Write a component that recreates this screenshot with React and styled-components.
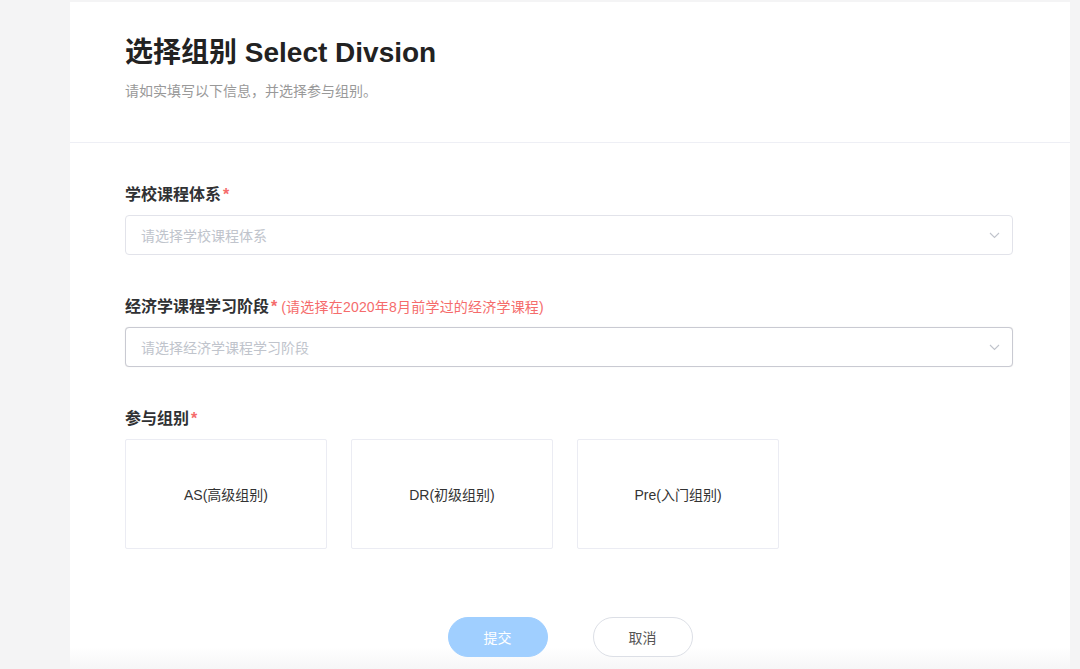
import React from 'react';
import styled, { createGlobalStyle } from 'styled-components';

const GlobalStyle = createGlobalStyle`
  html, body {
    margin: 0;
    padding: 0;
    background: #f4f4f5;
    font-family: "Liberation Sans", "Noto Sans CJK SC", sans-serif;
    color: #303133;
  }
  * {
    box-sizing: border-box;
  }
`;

const Page = styled.div`
  height: 669px;
  overflow: hidden;
  padding: 2px 10px 0 70px;
`;

const Panel = styled.div`
  width: 1000px;
  height: 667px;
  background: linear-gradient(to bottom, #ffffff calc(100% - 22px), #f6f6f7 100%);
`;

const Header = styled.header`
  padding: 33px 55px 41px;
  border-bottom: 1px solid #eeeff5;
`;

const Title = styled.h1`
  margin: 0;
  font-size: 28px;
  line-height: 36px;
  font-weight: 700;
  color: #222;
`;

const Subtitle = styled.p`
  margin: 10px 0 0;
  font-size: 14px;
  line-height: 20px;
  color: #999;
`;

const Form = styled.div`
  padding: 41px 57px 0 55px;
`;

const Field = styled.div`
  margin-bottom: 41px;
`;

const Label = styled.div`
  display: flex;
  align-items: center;
  font-size: 16px;
  line-height: 22px;
  font-weight: 700;
  color: #303133;
  margin-bottom: ${(p) => p.$gap || 9}px;
`;

const Star = styled.span`
  color: #f56c6c;
  font-weight: 700;
  margin-left: 2px;
`;

const Hint = styled.span`
  color: #f56c6c;
  font-size: 14px;
  font-weight: 400;
  margin-left: 4px;
  letter-spacing: 0.2px;
`;

const Select = styled.div`
  height: 40px;
  display: flex;
  align-items: center;
  justify-content: space-between;
  padding: 0 12px 0 15px;
  border: 1px solid ${(p) => (p.$active ? '#c9cad2' : '#e2e3ea')};
  border-radius: 4px;
  background: #fff;
  box-shadow: ${(p) => (p.$active ? '0 0 1px rgba(0,0,0,0.15)' : 'none')};
`;

const Placeholder = styled.span`
  font-size: 14px;
  color: #c0c4cc;
`;

const Cards = styled.div`
  display: flex;
  gap: 24px;
`;

const Card = styled.div`
  width: 202px;
  height: 110px;
  display: flex;
  align-items: center;
  justify-content: center;
  border: 1px solid #ebecf3;
  border-radius: 2px;
  font-size: 14px;
  color: #333;
  cursor: pointer;
`;

const Actions = styled.div`
  display: flex;
  justify-content: center;
  gap: 45px;
  padding-top: 68px;
`;

const Button = styled.button`
  width: 100px;
  height: 40px;
  border-radius: 20px;
  font-family: inherit;
  font-size: 14px;
  cursor: pointer;
  border: 1px solid ${(p) => (p.$primary ? '#a0cfff' : '#dcdfe6')};
  background: ${(p) => (p.$primary ? '#a0cfff' : '#fff')};
  color: ${(p) => (p.$primary ? '#fff' : '#555')};
`;

const Chevron = () => (
  <svg width="11" height="7" viewBox="0 0 11 7" fill="none">
    <path d="M1 1l4.5 4.5L10 1" stroke="#c0c4cc" strokeWidth="1.1" />
  </svg>
);

const groups = ['AS(高级组别)', 'DR(初级组别)', 'Pre(入门组别)'];

const App = () => {
  return (
    <Page>
      <GlobalStyle />
      <Panel>
        <Header>
          <Title>选择组别 Select Divsion</Title>
          <Subtitle>请如实填写以下信息，并选择参与组别。</Subtitle>
        </Header>

        <Form>
          <Field>
            <Label>
              学校课程体系<Star>*</Star>
            </Label>
            <Select>
              <Placeholder>请选择学校课程体系</Placeholder>
              <Chevron />
            </Select>
          </Field>

          <Field>
            <Label>
              经济学课程学习阶段<Star>*</Star>
              <Hint>(请选择在2020年8月前学过的经济学课程)</Hint>
            </Label>
            <Select $active>
              <Placeholder>请选择经济学课程学习阶段</Placeholder>
              <Chevron />
            </Select>
          </Field>

          <div>
            <Label $gap={9}>
              参与组别<Star>*</Star>
            </Label>
            <Cards>
              {groups.map((g) => (
                <Card key={g}>{g}</Card>
              ))}
            </Cards>
          </div>
        </Form>

        <Actions>
          <Button $primary>提交</Button>
          <Button>取消</Button>
        </Actions>
      </Panel>
    </Page>
  );
};

export default App;
